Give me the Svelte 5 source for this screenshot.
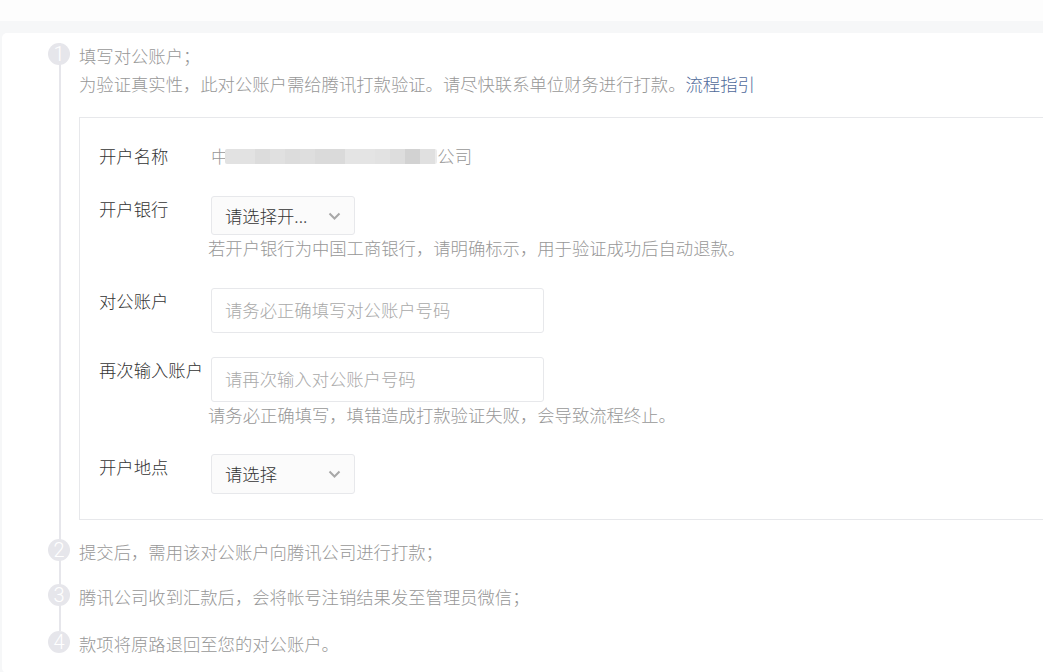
<script>
  const mosaic = ['#e2e2e2','#e2e2e2','#dcdcdc','#e0e0e0','#dcdcdc','#dedede','#dadada','#dadada','#e4e4e4','#e4e4e4','#e2e2e2','#dddddd','#d2d2d2','#e0e0e0','#ececec'];
</script>

<div class="page">
  <div class="topbar"></div>
  <div class="card">
    <div class="steps">
      <section class="step first">
        <span class="num">1</span>
        <p>填写对公账户；</p>
        <p>为验证真实性，此对公账户需给腾讯打款验证。请尽快联系单位财务进行打款。<a href="#guide">流程指引</a></p>
        <div class="box">
          <div class="row name">
            <span class="label">开户名称</span>
            <span class="value">中<span class="mosaic">{#each mosaic as c}<i style="background:{c}"></i>{/each}</span>公司</span>
          </div>
          <div class="row bank">
            <span class="label">开户银行</span>
            <div class="field">
              <div class="select"><span>请选择开...</span><svg viewBox="0 0 12 8" width="13" height="8"><path d="M1 1.5 L6 6.5 L11 1.5" /></svg></div>
              <div class="hint">若开户银行为中国工商银行，请明确标示，用于验证成功后自动退款。</div>
            </div>
          </div>
          <div class="row acct">
            <span class="label">对公账户</span>
            <div class="field"><div class="input">请务必正确填写对公账户号码</div></div>
          </div>
          <div class="row again">
            <span class="label">再次输入账户</span>
            <div class="field">
              <div class="input">请再次输入对公账户号码</div>
              <div class="hint">请务必正确填写，填错造成打款验证失败，会导致流程终止。</div>
            </div>
          </div>
          <div class="row place">
            <span class="label">开户地点</span>
            <div class="field"><div class="select tall"><span>请选择</span><svg viewBox="0 0 12 8" width="13" height="8"><path d="M1 1.5 L6 6.5 L11 1.5" /></svg></div></div>
          </div>
        </div>
      </section>
      <section class="step second"><span class="num">2</span><p>提交后，需用该对公账户向腾讯公司进行打款；</p></section>
      <section class="step third"><span class="num">3</span><p>腾讯公司收到汇款后，会将帐号注销结果发至管理员微信；</p></section>
      <section class="step last"><span class="num">4</span><p>款项将原路退回至您的对公账户。</p></section>
    </div>
  </div>
</div>

<style>
  :global(body) { margin: 0; background: #f5f6f7; overflow: hidden; }
  .page {
    width: 1043px; height: 672px; overflow: hidden;
    font-family: "Noto Sans CJK SC", "Liberation Sans", sans-serif;
    font-size: 17.33px; font-weight: 300; line-height: 28px; color: #979797;
    background: #f6f7f8;
  }
  .topbar { height: 21px; background: #fdfdfd; }
  .card {
    margin: 12px 0 0 2px; height: 640px; background: #fff;
    border-radius: 5px 0 0 5px; padding-top: 10px; box-sizing: border-box;
  }
  .steps { padding-left: 46px; }
  .step { position: relative; padding-left: 31px; }
  .first { margin-bottom: 19px; }
  .second { margin-bottom: 17px; }
  .third { margin-bottom: 19px; }
  .step::before {
    content: ""; position: absolute; left: 11px; top: 0; bottom: -19px; width: 2px; background: #e6e6eb;
  }
  .step.last::before { display: none; }
  .num {
    position: absolute; left: 0; top: 0; z-index: 1;
    width: 22px; height: 22px; border-radius: 50%;
    background: #e6e6eb; color: #fff; text-align: center;
    font-family: Roboto, sans-serif; font-size: 20px; font-weight: 300; line-height: 22px;
  }
  p { margin: 0; height: 28px; line-height: 26px; }
  a { color: #4f6a9a; text-decoration: none; }
  .box {
    margin-top: 18px; width: 1000px; box-sizing: border-box; height: 403px;
    border: 1px solid #e7e8eb; padding: 0 0 0 19px; color: #333;
  }
  .row { display: flex; }
  .label { width: 112px; flex: none; color: #333; white-space: nowrap; line-height: 26px; }
  .name { padding-top: 25px; height: 39px; }
  .value { color: #979797; display: inline-flex; line-height: 26px; }
  .mosaic {
    display: flex; align-self: flex-start; margin: 6px 0 0 -3px; height: 15px; width: 212px; overflow: hidden;
    border-radius: 2px;
  }
  .mosaic i { width: 15px; flex: none; }
  .bank { padding-top: 14px; }
  .field { display: flex; flex-direction: column; align-items: flex-start; }
  .select, .input {
    box-sizing: border-box; border: 1px solid #e7e8eb; border-radius: 3px;
    padding-left: 13px; white-space: nowrap;
  }
  .select {
    width: 144px; height: 39px; display: flex; align-items: center; justify-content: space-between;
    padding-right: 13px; background: #fbfbfb; color: #333;
  }
  .select.tall { height: 40px; }
  .select svg { fill: none; stroke: #a8a8a8; stroke-width: 2; }
  .input {
    width: 333px; height: 45px; line-height: 41px; color: #a9a9a9; background: #fff;
  }
  .hint { margin-left: -3px; height: 28px; line-height: 26px; color: #979797; white-space: nowrap; }
  .acct { margin-top: 25px; }
  .again { margin-top: 24px; }
  .place { margin-top: 24px; }
</style>
